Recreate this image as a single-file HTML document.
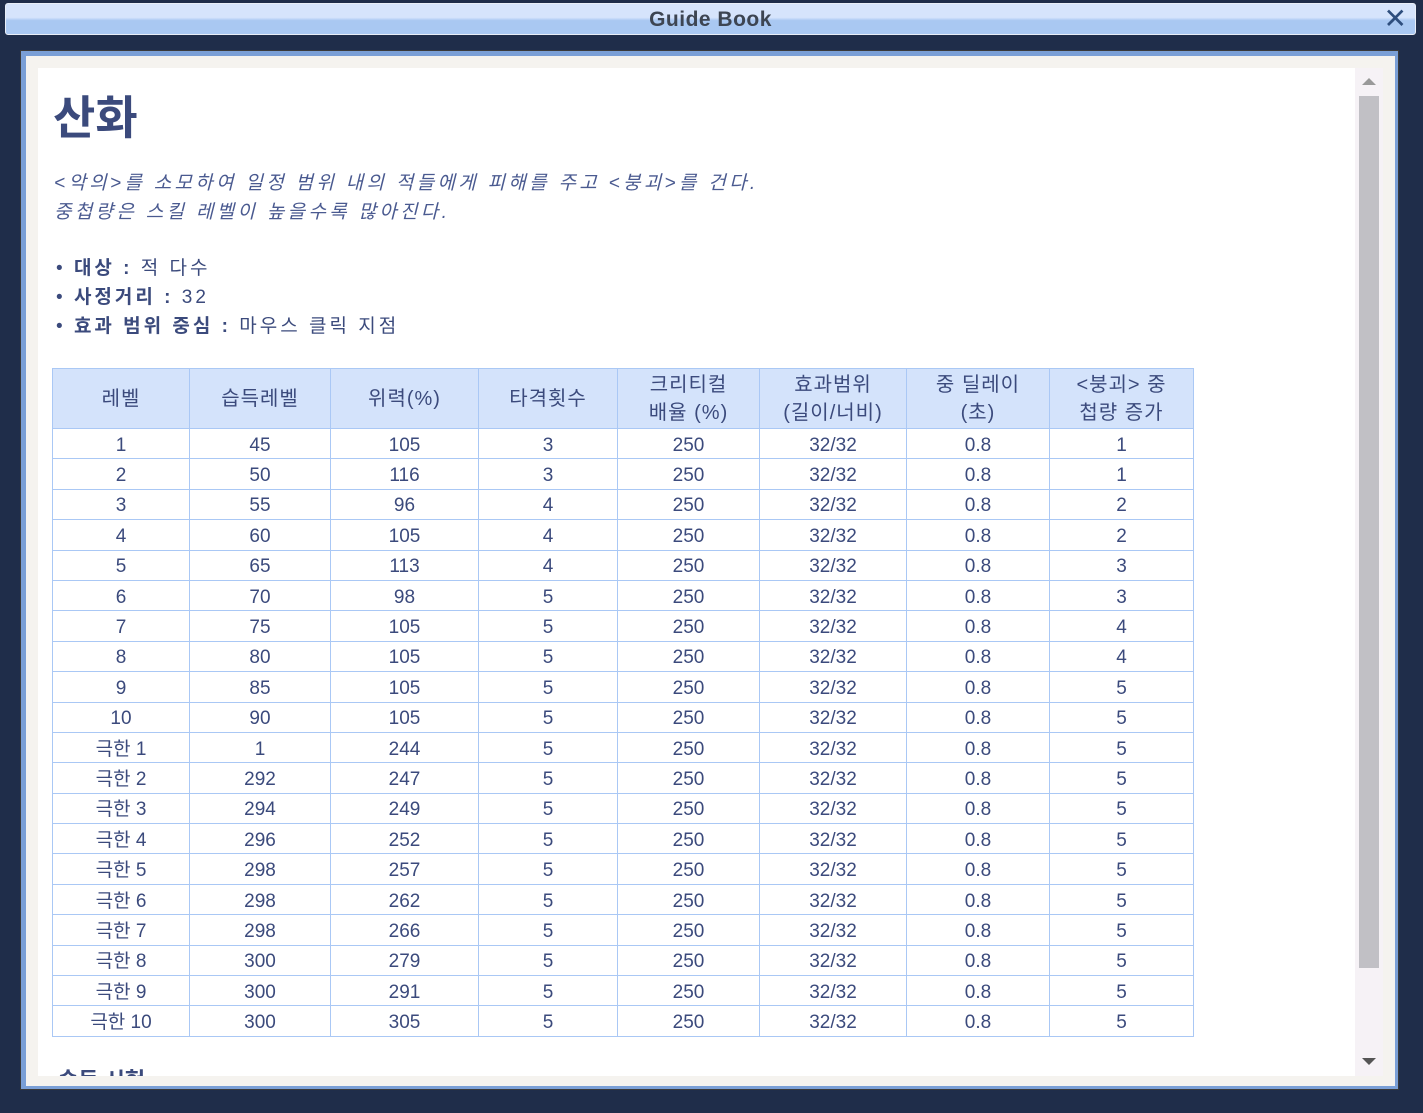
<!DOCTYPE html>
<html><head><meta charset="utf-8"><style>
*{margin:0;padding:0;box-sizing:border-box}
body{width:1423px;height:1113px;overflow:hidden;background:#1f2d4a;font-family:"Liberation Sans","Noto Sans CJK KR",sans-serif;position:relative;color:#3b4a7c}
.tb{position:absolute;left:5px;top:3px;width:1411px;height:32px;background:linear-gradient(#d6e4fc 0,#d6e4fc 45%,#a9c8f2 55%,#a9c8f2 100%);border:1px solid #e8eef8;border-radius:3px}
.tb .t{position:absolute;left:0;right:0;top:4px;text-align:center;font-weight:bold;font-size:21px;color:#3d4552;letter-spacing:.5px}
.tb .x{position:absolute;right:8px;top:0;font-size:28px;color:#2e4e7e;line-height:30px}
.fr{position:absolute;left:20px;top:50px;width:1379px;height:1040px;background:#7a9fd6;border:1px solid #3a3a3a}
.bg{position:absolute;left:26px;top:56px;width:1369px;height:1030px;background:#f5f3ef}
.wh{position:absolute;left:38px;top:68px;width:1317px;height:1008px;background:#fff;overflow:hidden}
.sb{position:absolute;left:1355px;top:68px;width:28px;height:1008px;background:#f6f2f6}
.th{position:absolute;left:1359px;top:96px;width:20px;height:872px;background:#c1c0c5}
.au{position:absolute;left:1362px;top:78px;width:0;height:0;border-left:7px solid transparent;border-right:7px solid transparent;border-bottom:7px solid #999}
.ad{position:absolute;left:1362px;top:1058px;width:0;height:0;border-left:7px solid transparent;border-right:7px solid transparent;border-top:7px solid #555}
h1{position:absolute;left:15px;top:14px;font-size:46px;font-weight:bold;color:#3b4a7c}
.d{position:absolute;left:16px;top:101px;font-size:19px;font-style:italic;line-height:29px;color:#4a5a90;letter-spacing:3.3px}
.b{position:absolute;left:18px;top:186px;font-size:19px;line-height:29px;letter-spacing:3px}
.b b{font-weight:bold}
table{position:absolute;left:14px;top:300px;border-collapse:collapse;font-size:19px;text-align:center}
td,th{border:1px solid #aac8f5;font-weight:normal}
td{height:30.4px;padding:4px 0 0;line-height:22px}
th{background:#d4e3fb;height:60px;line-height:28px;font-size:20px;letter-spacing:1px;padding:0}
.s{position:absolute;left:20px;top:995px;font-size:22px;font-weight:bold}
</style></head><body>
<div class="tb"><div class="t">Guide Book</div><div class="x">✕</div></div>
<div class="fr"></div><div class="bg"></div>
<div class="wh">
<h1>산화</h1>
<div class="d">&lt;악의&gt;를 소모하여 일정 범위 내의 적들에게 피해를 주고 &lt;붕괴&gt;를 건다.<br>중첩량은 스킬 레벨이 높을수록 많아진다.</div>
<div class="b">• <b>대상 :</b> 적 다수<br>• <b>사정거리 :</b> 32<br>• <b>효과 범위 중심 :</b> 마우스 클릭 지점</div>
<table>
<colgroup><col style="width:137px"><col style="width:141px"><col style="width:148px"><col style="width:139px"><col style="width:142px"><col style="width:147px"><col style="width:143px"><col style="width:144px"></colgroup>
<tr><th>레벨</th><th>습득레벨</th><th>위력(%)</th><th>타격횟수</th><th>크리티컬<br>배율 (%)</th><th>효과범위<br>(길이/너비)</th><th>중 딜레이<br>(초)</th><th>&lt;붕괴&gt; 중<br>첩량 증가</th></tr>
<tr><td>1</td><td>45</td><td>105</td><td>3</td><td>250</td><td>32/32</td><td>0.8</td><td>1</td></tr>
<tr><td>2</td><td>50</td><td>116</td><td>3</td><td>250</td><td>32/32</td><td>0.8</td><td>1</td></tr>
<tr><td>3</td><td>55</td><td>96</td><td>4</td><td>250</td><td>32/32</td><td>0.8</td><td>2</td></tr>
<tr><td>4</td><td>60</td><td>105</td><td>4</td><td>250</td><td>32/32</td><td>0.8</td><td>2</td></tr>
<tr><td>5</td><td>65</td><td>113</td><td>4</td><td>250</td><td>32/32</td><td>0.8</td><td>3</td></tr>
<tr><td>6</td><td>70</td><td>98</td><td>5</td><td>250</td><td>32/32</td><td>0.8</td><td>3</td></tr>
<tr><td>7</td><td>75</td><td>105</td><td>5</td><td>250</td><td>32/32</td><td>0.8</td><td>4</td></tr>
<tr><td>8</td><td>80</td><td>105</td><td>5</td><td>250</td><td>32/32</td><td>0.8</td><td>4</td></tr>
<tr><td>9</td><td>85</td><td>105</td><td>5</td><td>250</td><td>32/32</td><td>0.8</td><td>5</td></tr>
<tr><td>10</td><td>90</td><td>105</td><td>5</td><td>250</td><td>32/32</td><td>0.8</td><td>5</td></tr>
<tr><td>극한 1</td><td>1</td><td>244</td><td>5</td><td>250</td><td>32/32</td><td>0.8</td><td>5</td></tr>
<tr><td>극한 2</td><td>292</td><td>247</td><td>5</td><td>250</td><td>32/32</td><td>0.8</td><td>5</td></tr>
<tr><td>극한 3</td><td>294</td><td>249</td><td>5</td><td>250</td><td>32/32</td><td>0.8</td><td>5</td></tr>
<tr><td>극한 4</td><td>296</td><td>252</td><td>5</td><td>250</td><td>32/32</td><td>0.8</td><td>5</td></tr>
<tr><td>극한 5</td><td>298</td><td>257</td><td>5</td><td>250</td><td>32/32</td><td>0.8</td><td>5</td></tr>
<tr><td>극한 6</td><td>298</td><td>262</td><td>5</td><td>250</td><td>32/32</td><td>0.8</td><td>5</td></tr>
<tr><td>극한 7</td><td>298</td><td>266</td><td>5</td><td>250</td><td>32/32</td><td>0.8</td><td>5</td></tr>
<tr><td>극한 8</td><td>300</td><td>279</td><td>5</td><td>250</td><td>32/32</td><td>0.8</td><td>5</td></tr>
<tr><td>극한 9</td><td>300</td><td>291</td><td>5</td><td>250</td><td>32/32</td><td>0.8</td><td>5</td></tr>
<tr><td>극한 10</td><td>300</td><td>305</td><td>5</td><td>250</td><td>32/32</td><td>0.8</td><td>5</td></tr>
</table>
<div class="s">습득 시험</div>
</div>
<div class="sb"></div><div class="th"></div><div class="au"></div><div class="ad"></div>
</body></html>
